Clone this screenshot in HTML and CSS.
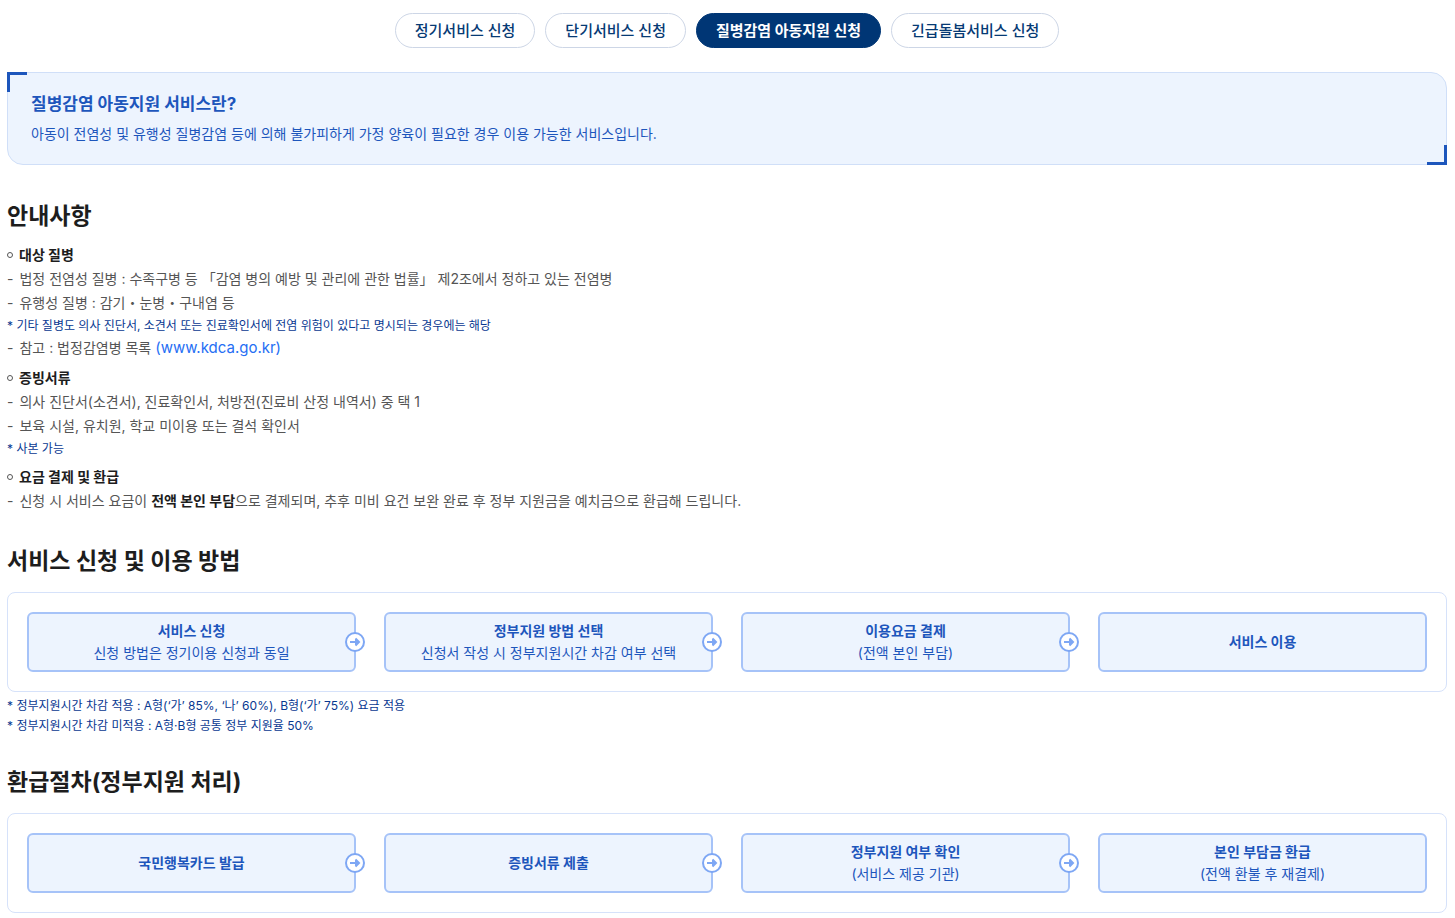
FILE: index.html
```html
<!DOCTYPE html>
<html lang="ko">
<head>
<meta charset="utf-8">
<title>질병감염 아동지원 신청</title>
<link rel="stylesheet" href="styles.css">
</head>
<body>
<svg class="symbols" aria-hidden="true">
  <symbol id="arrow" viewBox="0 0 20 20">
    <circle cx="10" cy="10" r="9" fill="#fff" stroke="#7ea7f4" stroke-width="2"/>
    <path d="M5 10H14M10.5 6.5L14 10L10.5 13.5" fill="none" stroke="#7ea7f4" stroke-width="2"/>
    <path d="M10 6.5v7l4-3.5z" fill="#7ea7f4"/>
  </symbol>
</svg>
<main class="page">
  <nav class="tabs">
    <button class="tab" type="button">정기서비스 신청</button>
    <button class="tab" type="button">단기서비스 신청</button>
    <button class="tab tab-active" type="button">질병감염 아동지원 신청</button>
    <button class="tab" type="button">긴급돌봄서비스 신청</button>
  </nav>

  <section class="intro">
    <h2 class="intro-title">질병감염 아동지원 서비스란?</h2>
    <p class="intro-text">아동이 전염성 및 유행성 질병감염 등에 의해 불가피하게 가정 양육이 필요한 경우 이용 가능한 서비스입니다.</p>
  </section>

  <section class="section">
    <h2 class="heading">안내사항</h2>
    <div class="guides">
      <div class="guide">
        <h3 class="guide-title">대상 질병</h3>
        <p class="line">법정 전염성 질병 : 수족구병 등 「감염 병의 예방 및 관리에 관한 법률」 제2조에서 정하고 있는 전염병</p>
        <p class="line">유행성 질병 : 감기・눈병・구내염 등</p>
        <p class="note">기타 질병도 의사 진단서, 소견서 또는 진료확인서에 전염 위험이 있다고 명시되는 경우에는 해당</p>
        <p class="line">참고 : 법정감염병 목록 <a class="link" href="#">(www.kdca.go.kr)</a></p>
      </div>
      <div class="guide">
        <h3 class="guide-title">증빙서류</h3>
        <p class="line">의사 진단서(소견서), 진료확인서, 처방전(진료비 산정 내역서) 중 택 1</p>
        <p class="line">보육 시설, 유치원, 학교 미이용 또는 결석 확인서</p>
        <p class="note">사본 가능</p>
      </div>
      <div class="guide">
        <h3 class="guide-title">요금 결제 및 환급</h3>
        <p class="line">신청 시 서비스 요금이 <strong class="strong">전액 본인 부담</strong>으로 결제되며, 추후 미비 요건 보완 완료 후 정부 지원금을 예치금으로 환급해 드립니다.</p>
      </div>
    </div>
  </section>

  <section class="section">
    <h2 class="heading">서비스 신청 및 이용 방법</h2>
    <ol class="steps">
      <li class="step"><strong class="step-title">서비스 신청</strong><span>신청 방법은 정기이용 신청과 동일</span><svg class="arrow" aria-hidden="true"><use href="#arrow"/></svg></li>
      <li class="step"><strong class="step-title">정부지원 방법 선택</strong><span>신청서 작성 시 정부지원시간 차감 여부 선택</span><svg class="arrow" aria-hidden="true"><use href="#arrow"/></svg></li>
      <li class="step"><strong class="step-title">이용요금 결제</strong><span>(전액 본인 부담)</span><svg class="arrow" aria-hidden="true"><use href="#arrow"/></svg></li>
      <li class="step"><strong class="step-title">서비스 이용</strong></li>
    </ol>
    <div class="footnotes">
      <p class="note">정부지원시간 차감 적용 : A형(‘가’ 85%, ‘나’ 60%), B형(‘가’ 75%) 요금 적용</p>
      <p class="note">정부지원시간 차감 미적용 : A형·B형 공통 정부 지원율 50%</p>
    </div>
  </section>

  <section class="section">
    <h2 class="heading">환급절차(정부지원 처리)</h2>
    <ol class="steps">
      <li class="step"><strong class="step-title">국민행복카드 발급</strong><svg class="arrow" aria-hidden="true"><use href="#arrow"/></svg></li>
      <li class="step"><strong class="step-title">증빙서류 제출</strong><svg class="arrow" aria-hidden="true"><use href="#arrow"/></svg></li>
      <li class="step"><strong class="step-title">정부지원 여부 확인</strong><span>(서비스 제공 기관)</span><svg class="arrow" aria-hidden="true"><use href="#arrow"/></svg></li>
      <li class="step"><strong class="step-title">본인 부담금 환급</strong><span>(전액 환불 후 재결제)</span></li>
    </ol>
  </section>
</main>
</body>
</html>
```

FILE: styles.css
```css
*,
*::before,
*::after {
  box-sizing: border-box;
  margin: 0;
  padding: 0;
}

body {
  background: #fff;
  color: #555;
  font-family: Inter, "Noto Sans CJK KR", sans-serif;
  font-size: 14px;
  line-height: 24px;
}

.symbols {
  display: none;
}

.page {
  padding: 13px 8px 4px 7px;
}

.tabs {
  display: flex;
  flex-wrap: wrap;
  justify-content: center;
  gap: 10px;
}

.tab {
  height: 35px;
  padding: 0 19px;
  border: 1px solid #cdd6e6;
  border-radius: 18px;
  background: #fff;
  color: #063a74;
  font-family: inherit;
  font-size: 15px;
  font-weight: 500;
  line-height: 24px;
  cursor: pointer;
}

.tab-active {
  border-color: #003675;
  background: #003675;
  color: #fff;
  font-weight: 700;
}

.intro {
  position: relative;
  margin-top: 24px;
  padding: 18px 23px 18px;
  border: 1px solid #d0dff8;
  border-radius: 0 16px 0 16px;
  background: #edf4fe;
  color: #1d56bc;
}

.intro::before,
.intro::after {
  content: "";
  position: absolute;
  width: 20px;
  height: 20px;
  border: 0 solid #1d56bc;
}

.intro::before {
  top: -1px;
  left: -1px;
  border-width: 3px 0 0 3px;
}

.intro::after {
  right: -1px;
  bottom: -1px;
  border-width: 0 3px 3px 0;
}

.intro-title {
  margin-bottom: 4px;
  font-size: 17px;
  line-height: 27px;
}

.section {
  margin-top: 28px;
}

.intro + .section {
  margin-top: 33px;
}

.heading {
  margin-bottom: 13px;
  color: #1d1d1d;
  font-size: 23px;
  line-height: 36px;
}

.guides {
  display: flex;
  flex-direction: column;
  gap: 6px;
  margin-top: -4px;
  padding-bottom: 2px;
}

.guide-title {
  display: flex;
  align-items: center;
  gap: 6px;
  color: #1d1d1d;
  font-size: 14px;
  line-height: 24px;
}

.guide-title::before {
  content: "";
  width: 6px;
  height: 6px;
  border: 1px solid #555;
  border-radius: 50%;
}

.line::before {
  content: "-";
  margin-right: 6px;
}

.strong {
  color: #1d1d1d;
}

.link {
  color: #256ef4;
  font-size: 15px;
  text-decoration: none;
}

.note {
  color: #083891;
  font-size: 12px;
  line-height: 21px;
}

.note::before {
  content: "* ";
}

.steps {
  display: grid;
  grid-template-columns: repeat(4, 1fr);
  gap: 28px;
  padding: 19px;
  border: 1px solid #d6e2fa;
  border-radius: 8px;
  list-style: none;
}

.step {
  position: relative;
  display: flex;
  flex-direction: column;
  align-items: center;
  justify-content: center;
  min-height: 60px;
  border: 2px solid #a6c3f8;
  border-radius: 6px;
  background: #edf4fe;
  color: #1d56bc;
  font-size: 14px;
  line-height: 22px;
  text-align: center;
}

.arrow {
  position: absolute;
  top: 50%;
  right: -11px;
  width: 20px;
  height: 20px;
  margin-top: -10px;
}

.footnotes {
  padding-top: 4px;
}

.footnotes .note {
  line-height: 20px;
}
```
